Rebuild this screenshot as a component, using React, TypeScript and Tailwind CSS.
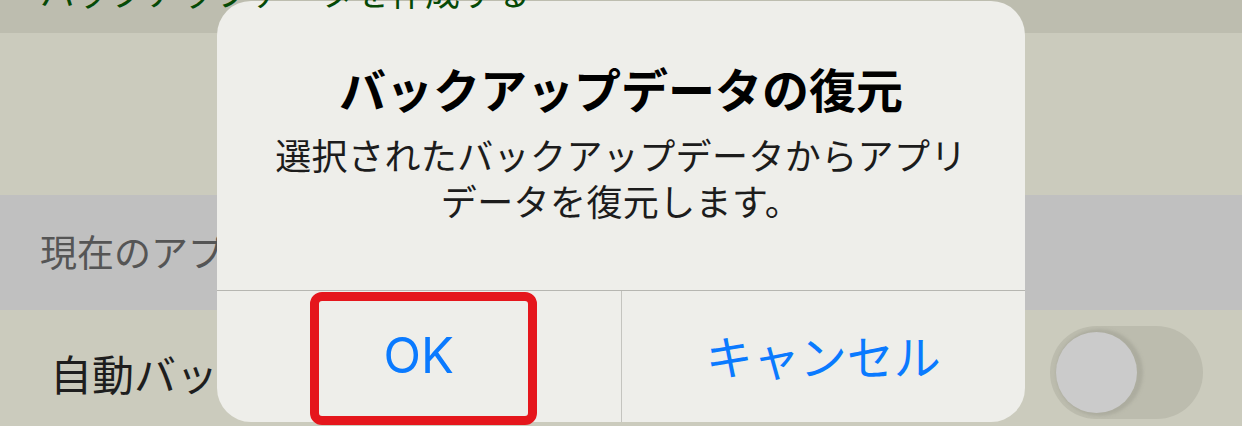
import React from "react";

const jp = { fontFamily: '"Noto Sans CJK JP", "Noto Sans", sans-serif' };

const Switch: React.FC = () => (
  <div className="relative w-[153px] h-[93px] rounded-full bg-[#bcbcae]">
    <div className="absolute left-[6px] top-[6px] w-[81px] h-[81px] rounded-full bg-[#cbcbcb] shadow-[3px_0_3px_3px_rgba(160,160,148,0.55)]" />
  </div>
);

const AlertDialog: React.FC = () => (
  <div className="absolute left-[217px] top-[1px] w-[808px] h-[421px] rounded-[34px] bg-[#eeeeea] flex flex-col overflow-hidden" style={jp}>
    <div className="h-[289px] flex flex-col items-center pt-[59px]">
      <div className="text-[47px] leading-[56px] font-bold text-black">バックアップデータの復元</div>
      <div className="mt-[15px] text-[36px] leading-[46px] text-[#1c1c1c] text-center tracking-[0.4px]">
        <div>選択されたバックアップデータからアプリ</div>
        <div>データを復元します。</div>
      </div>
    </div>
    <div className="flex-1 flex border-t border-[#b6b6b1]">
      <button className="flex-1 flex items-center justify-center pb-[2px] text-[#0a7aff] text-[49px] font-normal" style={{ fontFamily: 'Inter, "Noto Sans", sans-serif' }}>
        OK
      </button>
      <button className="flex-1 flex items-center justify-center pb-[2px] border-l border-[#c4c4bf] text-[#0a7aff] text-[47px]">
        キャンセル
      </button>
    </div>
  </div>
);

export default function App() {
  return (
    <div className="relative w-[1242px] h-[426px] overflow-hidden bg-[#cbcbbd]" style={jp}>
      <div className="h-[33px] bg-[#bdbdaf] pl-[40px] overflow-hidden">
        <div className="relative z-10 -mt-[27px] text-[35px] leading-[35px] text-[#064a06] whitespace-nowrap">
          バックアップデータを作成する
        </div>
      </div>
      <div className="h-[162px] bg-[#cbcbbd]" />
      <div className="h-[115px] bg-[#c0c0c0] flex items-center pl-[40px] pb-[2px]">
        <span className="text-[37px] text-[#555555]">現在のアプリデータ</span>
      </div>
      <div className="h-[124px] bg-[#cbcbbd] flex items-center justify-between pl-[50px] pr-[39px]">
        <span className="text-[42px] text-[#1e1e1e]">自動バックアップ</span>
        <Switch />
      </div>

      <AlertDialog />

      <div className="absolute left-[310px] top-[292px] w-[227px] h-[133px] border-[9px] border-[#e5161c] rounded-[12px] pointer-events-none" />
    </div>
  );
}
